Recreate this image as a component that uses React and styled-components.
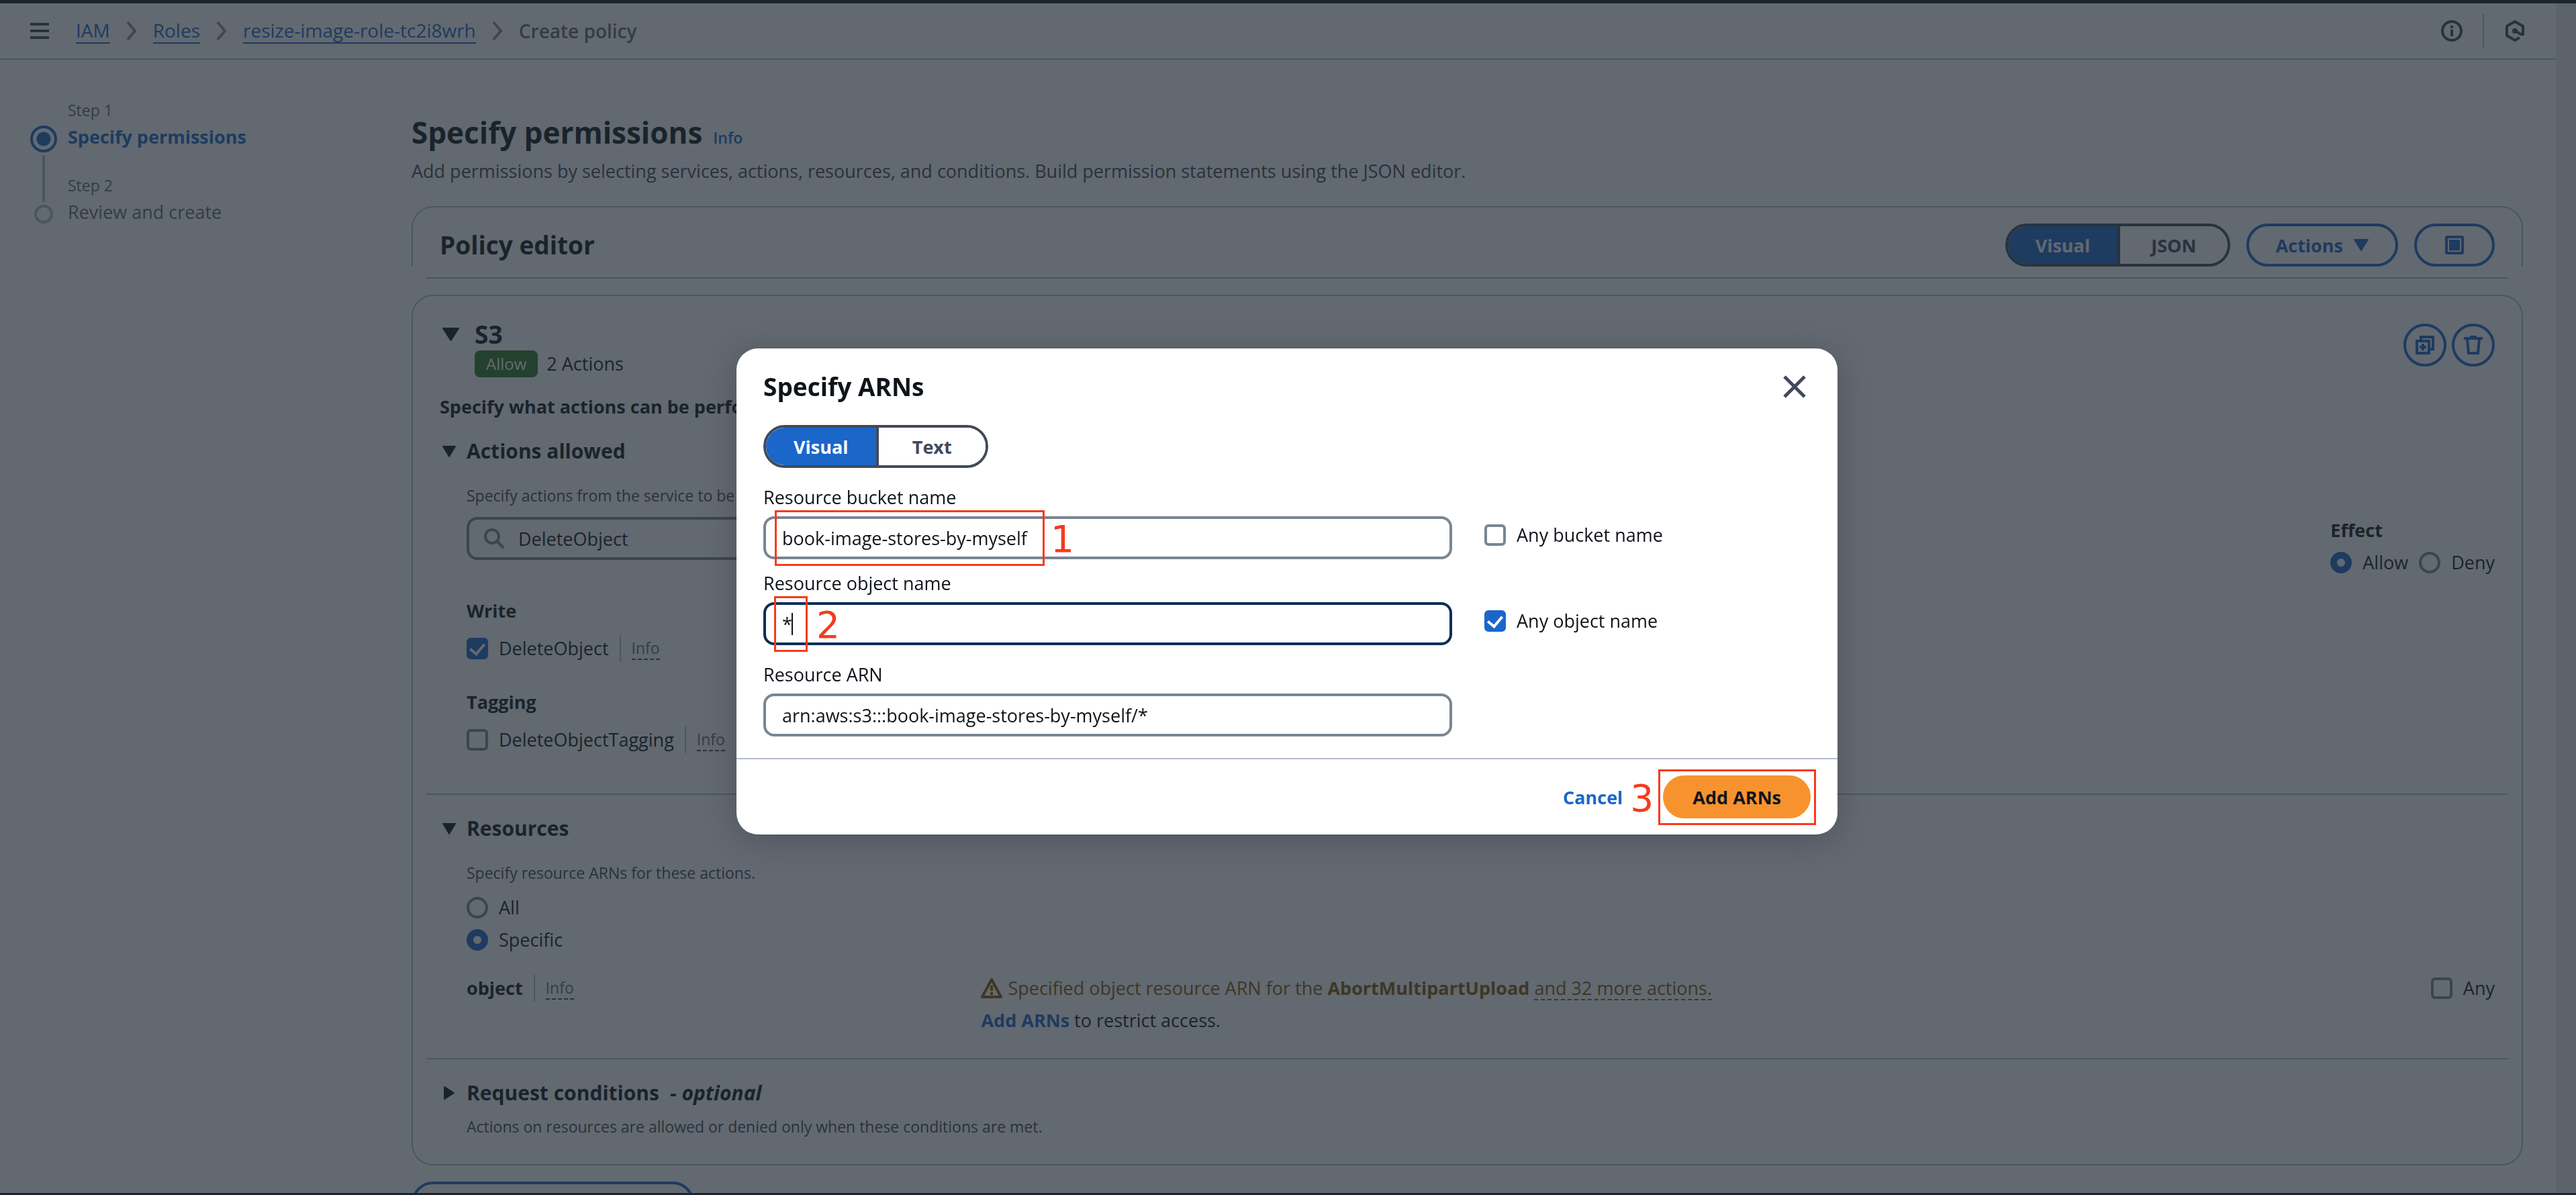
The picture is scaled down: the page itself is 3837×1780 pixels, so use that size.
import React from 'react';
import styled, { createGlobalStyle, css } from 'styled-components';

const c = {
  ink: '#0f141a',
  body: '#424650',
  muted: '#656871',
  blue: '#1b66c9',
  line: '#b4bcc9',
  field: '#7a8594',
  frame: '#424a58',
  red: '#f53b1e',
};

const Global = createGlobalStyle`
  * { box-sizing: border-box; }
  body {
    margin: 0;
    background: #161d26;
    color: ${c.ink};
    font-size: 27px;
    line-height: 40px;
  }
  body, button, input { font-family: "Open Sans", "Noto Sans", sans-serif; }
  h1, h2, h3, p, ol, ul { margin: 0; padding: 0; }
  ol, ul { list-style: none; }
  svg { display: block; flex: none; }
`;

const Shell = styled.div`
  height: 100vh;
  overflow: hidden;
  display: grid;
  grid-template-rows: 5px minmax(0, 1fr) 3px;
  background: #161d26;
`;
const Window = styled.div`
  grid-row: 2;
  display: grid;
  grid-template-columns: minmax(0, 1fr) 30px;
  background: #fff;
  overflow: hidden;
`;
const ScrollTrack = styled.div`
  background: #ececec;
`;
const Page = styled.div`
  min-width: 0;
`;

/* ---------- top navigation ---------- */
const Nav = styled.header`
  height: 84px;
  padding: 0 45px;
  display: flex;
  align-items: center;
  gap: 40px;
  border-bottom: 2px solid ${c.line};
`;
const PlainButton = styled.button`
  border: 0;
  padding: 0;
  background: none;
  color: ${(p) => p.$color || c.body};
  display: flex;
  cursor: pointer;
`;
const Crumbs = styled.ol`
  flex: 1;
  display: flex;
  align-items: center;
  gap: 16px;
  font-size: 28px;
  color: ${c.muted};
`;
const Crumb = styled.li`
  display: flex;
  align-items: center;
  gap: 16px;
  font-weight: ${(p) => (p.$last ? 600 : 400)};
`;
const CrumbLink = styled.a`
  color: ${c.blue};
  text-decoration: none;
  line-height: 36px;
  border-bottom: 2px solid ${c.blue};
`;
const NavTools = styled.div`
  display: flex;
  align-items: center;
  gap: 30px;
`;
const VRule = styled.span`
  width: 2px;
  height: ${(p) => p.$h}px;
  background: ${c.line};
`;

/* ---------- wizard layout ---------- */
const Wizard = styled.div`
  display: grid;
  grid-template-columns: 568px minmax(0, 1fr);
  padding: 0 49px 0 45px;
`;
const Steps = styled.ol`
  padding-top: 59px;
`;
const Step = styled.li`
  display: grid;
  grid-template-columns: 40px 1fr;
  column-gap: 16px;
  height: 112px;
`;
const Track = styled.div`
  display: flex;
  flex-direction: column;
  align-items: center;
  gap: 4px;
  padding-top: ${(p) => (p.$first ? 39 : 0)}px;
`;
const TrackLine = styled.span`
  width: 4px;
  background: ${c.line};
  ${(p) => (p.$lead ? 'height: 41px;' : 'flex: 1;')}
`;
const StepDot = styled.span`
  border-radius: 50%;
  ${(p) =>
    p.$active
      ? css`
          width: 40px;
          height: 40px;
          border: 4px solid ${c.blue};
          background: radial-gradient(circle, ${c.blue} 10px, transparent 11px);
        `
      : css`
          width: 28px;
          height: 28px;
          border: 4px solid ${c.line};
        `}
`;
const StepText = styled.div`
  display: flex;
  flex-direction: column;
  gap: 4px;
`;
const StepNumber = styled.span`
  font-size: 23px;
  line-height: 32px;
  color: ${c.muted};
`;
const StepName = styled.a`
  color: ${(p) => (p.$active ? c.blue : c.muted)};
  font-weight: ${(p) => (p.$active ? 700 : 400)};
  text-decoration: none;
`;

const Main = styled.main`
  padding-top: 78px;
`;
const TitleRow = styled.div`
  display: flex;
  align-items: baseline;
  gap: 16px;
`;
const PageTitle = styled.h1`
  font-size: 44px;
  line-height: 60px;
  font-weight: 700;
`;
const InfoLink = styled.a`
  font-size: 23px;
  font-weight: 600;
  color: ${c.blue};
  text-decoration: none;
`;
const Lead = styled.p`
  margin: 8px 0 32px;
  color: ${c.body};
`;

/* ---------- buttons ---------- */
const Pill = styled.button`
  height: 64px;
  padding: 0 40px;
  border: 4px solid ${c.blue};
  border-radius: 32px;
  background: #fff;
  color: ${c.blue};
  font-size: 27px;
  font-weight: 700;
  display: flex;
  align-items: center;
  justify-content: center;
  gap: 16px;
  cursor: pointer;
  ${(p) => p.$icon && 'width: 120px; padding: 0;'}
  ${(p) => p.$round && 'width: 64px; padding: 0;'}
  ${(p) => p.$link && 'border-color: transparent; background: none;'}
  ${(p) => p.$primary && `border-color: #f7932f; background: #f7932f; color: ${c.ink};`}
`;
const Segments = styled.div`
  width: 335px;
  height: 64px;
  display: grid;
  grid-template-columns: 1fr 1fr;
  border: 4px solid ${c.frame};
  border-radius: 32px;
  overflow: hidden;
  background: #fff;
`;
const Segment = styled.button`
  border: 0;
  padding: 0;
  font-size: 27px;
  font-weight: 700;
  color: ${(p) => (p.$on ? '#fff' : c.frame)};
  background: ${(p) => (p.$on ? c.blue : '#fff')};
  & + & {
    border-left: 4px solid ${c.frame};
  }
`;

/* ---------- policy editor ---------- */
const EditorHeader = styled.section`
  padding: 24px 40px 0;
  display: flex;
  align-items: center;
  justify-content: space-between;
  border: 2px solid ${c.line};
  border-bottom: 0;
  border-radius: 32px 32px 0 0;
`;
const CardTitle = styled.h2`
  font-size: 37px;
  line-height: 48px;
  font-weight: 700;
`;
const Tools = styled.div`
  display: flex;
  gap: ${(p) => p.$gap}px;
`;
const EditorRule = styled.div`
  margin: 16px 22px 24px;
  height: 2px;
  background: ${c.line};
`;
const Card = styled.section`
  padding: 33px 0 40px;
  border: 2px solid ${c.line};
  border-radius: 32px;
`;
const CardHead = styled.div`
  padding: 0 40px;
  display: flex;
  justify-content: space-between;
`;
const ServiceTitle = styled.div`
  display: grid;
  grid-template-columns: 52px auto;
`;
const Caret = styled.button`
  border: 0;
  padding: 0 0 0 4px;
  background: none;
  color: ${c.ink};
  display: flex;
  align-items: center;
`;
const Summary = styled.div`
  grid-column: 2;
  display: flex;
  align-items: center;
  gap: 13px;
  height: 40px;
`;
const Badge = styled.span`
  padding: 0 17px;
  border-radius: 8px;
  background: #2e7a22;
  color: #fff;
  font-size: 24px;
`;
const ServiceTools = styled.div`
  padding-top: 8px;
  display: flex;
  gap: 8px;
`;
const Prompt = styled.p`
  margin: 24px 40px;
  font-weight: 700;
`;
const Section = styled.section`
  padding: 0 40px;
`;
const SectionHead = styled.div`
  display: grid;
  grid-template-columns: 40px 1fr;
`;
const SectionTitle = styled.h3`
  font-size: 30px;
  line-height: 44px;
  font-weight: 700;
  display: flex;
  gap: 16px;
`;
const SectionBody = styled.div`
  padding-left: 40px;
`;
const Hint = styled.p`
  margin-top: ${(p) => p.$top}px;
  font-size: 23px;
  line-height: 32px;
  color: ${c.body};
`;
const Hr = styled.hr`
  margin: ${(p) => p.$top}px 20px 28px;
  border: 0;
  height: 2px;
  background: ${c.line};
`;
const Split = styled.div`
  margin-top: 16px;
  display: flex;
  justify-content: space-between;
  align-items: flex-start;
  height: 64px;
`;
const SearchBox = styled.label`
  width: 33%;
  height: 64px;
  padding: 0 22px;
  display: flex;
  align-items: center;
  gap: 20px;
  border: 4px solid ${c.field};
  border-radius: 16px;
  color: ${c.field};
`;
const SearchInput = styled.input`
  flex: 1;
  border: 0;
  padding: 0;
  background: none;
  font-size: 27px;
  color: ${c.ink};
  outline: 0;
`;
const Effect = styled.fieldset`
  margin: 0;
  border: 0;
  padding: 0;
  display: grid;
  gap: 8px;
`;
const Strong = styled.div`
  font-weight: 700;
  ${(p) => p.$top && `margin-top: ${p.$top}px;`}
`;
const Line = styled.div`
  display: flex;
  align-items: center;
  gap: 16px;
  height: 40px;
  ${(p) => p.$top && `margin-top: ${p.$top}px;`}
`;
const Choice = styled.label`
  display: flex;
  align-items: center;
  gap: 16px;
  height: 40px;
`;
const Box = styled.input.attrs({ type: 'checkbox' })`
  appearance: none;
  margin: 0;
  width: 32px;
  height: 32px;
  flex: none;
  border: 4px solid ${c.field};
  border-radius: 6px;
  display: grid;
  place-items: center;
  &:checked {
    border-color: ${c.blue};
    background: ${c.blue};
  }
  &:checked::after {
    content: '';
    width: 10px;
    height: 17px;
    margin-bottom: 4px;
    border: solid #fff;
    border-width: 0 4px 4px 0;
    transform: rotate(40deg);
  }
`;
const Radio = styled.input.attrs({ type: 'radio' })`
  appearance: none;
  margin: 0;
  width: 32px;
  height: 32px;
  flex: none;
  border: 4px solid ${c.field};
  border-radius: 50%;
  &:checked {
    border: 10px solid ${c.blue};
  }
`;
const Term = styled.button`
  border: 0;
  border-bottom: 2px dashed ${(p) => p.$color || c.body};
  padding: 0;
  background: none;
  font-size: ${(p) => (p.$large ? 27 : 23)}px;
  line-height: 32px;
  color: ${(p) => p.$color || c.muted};
`;
const ResourceGrid = styled.div`
  margin-top: 32px;
  display: grid;
  grid-template-columns: minmax(0, 1fr) minmax(0, 3fr) auto;
  column-gap: 70px;
`;
const Warning = styled.div`
  display: flex;
  align-items: center;
  gap: 8px;
  height: 40px;
  color: #855900;
`;
const TextButton = styled.button`
  border: 0;
  padding: 0;
  background: none;
  font-size: 27px;
  font-weight: 700;
  line-height: 40px;
  color: ${c.blue};
`;
const AddRow = styled.div`
  margin-top: 24px;
`;
const AddPermissions = styled(Pill)`
  width: 421px;
`;

/* ---------- dialog ---------- */
const Overlay = styled.div`
  position: fixed;
  inset: 0;
  padding: 0 3px 18px 0;
  display: flex;
  align-items: center;
  justify-content: center;
  background: rgba(32, 42, 51, 0.7);
`;
const Dialog = styled.div`
  width: 1640px;
  max-width: 100%;
  border-radius: 32px;
  background: #fff;
  box-shadow: 0 8px 48px rgba(40, 30, 50, 0.3);
`;
const DialogHead = styled.div`
  padding: 33px 47px 33px 40px;
  display: flex;
  align-items: center;
  justify-content: space-between;
`;
const DialogBody = styled.div`
  padding: 0 40px 32px;
`;
const FieldRow = styled.div`
  margin-top: ${(p) => p.$top}px;
  display: grid;
  grid-template-columns: minmax(0, 19fr) minmax(0, 9fr);
  column-gap: 48px;
`;
const Field = styled.div`
  display: grid;
  gap: 8px;
`;
const InputWrap = styled.div`
  position: relative;
`;
const TextInput = styled.input`
  display: block;
  width: 100%;
  height: 64px;
  padding: 0 24px;
  border: 4px solid ${(p) => (p.$focus ? '#0b2e57' : c.field)};
  border-radius: 16px;
  font-size: 27px;
  color: ${c.ink};
  outline: 0;
`;
const TextCaret = styled.span`
  position: absolute;
  left: 42px;
  top: 16px;
  width: 2px;
  height: 33px;
  background: ${c.ink};
`;
const Aside = styled.div`
  align-self: end;
  padding-bottom: 16px;
`;
const DialogFoot = styled.div`
  padding: 24px 40px;
  display: flex;
  justify-content: flex-end;
  gap: 16px;
  border-top: 2px solid ${c.line};
`;
const Marked = styled.div`
  position: relative;
`;
const MarkFrame = styled.span`
  position: absolute;
  left: ${(p) => p.$x}px;
  top: -9px;
  width: ${(p) => p.$w}px;
  height: 83px;
  border: 3px solid ${c.red};
  pointer-events: none;
`;
const MarkNumber = styled.span`
  position: absolute;
  left: ${(p) => p.$x}px;
  top: 0;
  font-family: "DejaVu Sans", sans-serif;
  font-size: 55px;
  line-height: 68px;
  color: ${c.red};
  pointer-events: none;
`;

/* ---------- icons ---------- */
const Chevron = () => (
  <svg width="32" height="32" viewBox="0 0 32 32" fill="none" stroke="#8c8c94" strokeWidth="4">
    <path d="M10 3l11 13-11 13" />
  </svg>
);
const Down = ({ w, h }) => (
  <svg width={w} height={h} viewBox="0 0 24 20" preserveAspectRatio="none" fill="currentColor" stroke="currentColor" strokeWidth="2" strokeLinejoin="round">
    <path d="M1 1h22L12 19z" />
  </svg>
);
const Right = () => (
  <svg width="20" height="22" viewBox="0 0 20 22" fill="currentColor" stroke="currentColor" strokeWidth="2" strokeLinejoin="round">
    <path d="M3 2v18l14-9z" />
  </svg>
);

const InfoTerm = () => <Term type="button">Info</Term>;

function ActionOption({ id, name, checked }) {
  return (
    <Line $top={16}>
      <Choice htmlFor={id}>
        <Box id={id} defaultChecked={checked} />
        {name}
      </Choice>
      <VRule $h={40} />
      <InfoTerm />
    </Line>
  );
}

export default function App() {
  return (
    <>
      <Global />
      <Shell>
        <Window>
          <Page>
            <Nav>
              <PlainButton type="button" aria-label="Open navigation">
                <svg width="28" height="24" viewBox="0 0 28 24" fill="currentColor">
                  <path d="M0 0h28v4H0zM0 10h28v4H0zM0 20h28v4H0z" />
                </svg>
              </PlainButton>
              <Crumbs>
                {['IAM', 'Roles', 'resize-image-role-tc2i8wrh'].map((t) => (
                  <Crumb key={t}>
                    <CrumbLink href="#">{t}</CrumbLink>
                    <Chevron />
                  </Crumb>
                ))}
                <Crumb $last>Create policy</Crumb>
              </Crumbs>
              <NavTools>
                <PlainButton type="button" aria-label="Help">
                  <svg width="32" height="32" viewBox="0 0 32 32" fill="none" stroke="currentColor" strokeWidth="4">
                    <circle cx="16" cy="16" r="14" />
                    <path d="M16 8v4M16 14v10" />
                  </svg>
                </PlainButton>
                <VRule $h={50} />
                <PlainButton type="button" aria-label="Amazon Q">
                  <svg width="32" height="32" viewBox="0 0 32 32" fill="none" stroke="currentColor" strokeWidth="4" strokeLinejoin="round">
                    <path d="M28 23V9L16 2 4 9v14l12 7 7-4" />
                    <circle cx="16" cy="16" r="4" fill="currentColor" stroke="none" />
                    <path d="M16 16l11 6" />
                  </svg>
                </PlainButton>
              </NavTools>
            </Nav>

            <Wizard>
              <Steps>
                <Step>
                  <Track $first>
                    <StepDot $active />
                    <TrackLine />
                  </Track>
                  <StepText>
                    <StepNumber>Step 1</StepNumber>
                    <StepName href="#" $active>Specify permissions</StepName>
                  </StepText>
                </Step>
                <Step>
                  <Track>
                    <TrackLine $lead />
                    <StepDot />
                  </Track>
                  <StepText>
                    <StepNumber>Step 2</StepNumber>
                    <StepName href="#">Review and create</StepName>
                  </StepText>
                </Step>
              </Steps>

              <Main>
                <TitleRow>
                  <PageTitle>Specify permissions</PageTitle>
                  <InfoLink href="#">Info</InfoLink>
                </TitleRow>
                <Lead>
                  Add permissions by selecting services, actions, resources, and conditions. Build permission statements using the JSON editor.
                </Lead>

                <EditorHeader>
                  <CardTitle>Policy editor</CardTitle>
                  <Tools $gap={24}>
                    <Segments>
                      <Segment type="button" $on>Visual</Segment>
                      <Segment type="button">JSON</Segment>
                    </Segments>
                    <Pill type="button">
                      Actions
                      <Down w={22} h={18} />
                    </Pill>
                    <Pill type="button" $icon aria-label="Toggle panel">
                      <svg width="28" height="28" viewBox="0 0 28 28" fill="none" stroke="currentColor">
                        <rect x="2" y="2" width="24" height="24" rx="1" strokeWidth="4" />
                        <rect x="6" y="6" width="16" height="16" fill="currentColor" stroke="none" />
                        <rect x="5" y="5" width="18" height="18" stroke="#fff" strokeWidth="2" />
                      </svg>
                    </Pill>
                  </Tools>
                </EditorHeader>
                <EditorRule />

                <Card>
                  <CardHead>
                    <ServiceTitle>
                      <Caret type="button" aria-label="Collapse S3">
                        <Down w={25} h={20} />
                      </Caret>
                      <CardTitle>S3</CardTitle>
                      <Summary>
                        <Badge>Allow</Badge>
                        <span>2 Actions</span>
                      </Summary>
                    </ServiceTitle>
                    <ServiceTools>
                      <Pill type="button" $round aria-label="Duplicate">
                        <svg width="28" height="28" viewBox="0 0 28 28" fill="none" stroke="currentColor" strokeWidth="4">
                          <path d="M8 8V2h18v18h-6" />
                          <path d="M2 8h18v18H2zM11 12v10M6 17h10" />
                        </svg>
                      </Pill>
                      <Pill type="button" $round aria-label="Delete">
                        <svg width="28" height="28" viewBox="0 0 28 28" fill="none" stroke="currentColor" strokeWidth="4">
                          <path d="M0 4h28M9 2h10M5 5l2 21h14l2-21" />
                        </svg>
                      </Pill>
                    </ServiceTools>
                  </CardHead>
                  <Prompt>Specify what actions can be performed on specific resources in S3.</Prompt>

                  <Section>
                    <SectionHead>
                      <Caret type="button" aria-label="Collapse actions">
                        <Down w={20} h={17} />
                      </Caret>
                      <SectionTitle>Actions allowed</SectionTitle>
                    </SectionHead>
                    <SectionBody>
                      <Hint $top={28}>Specify actions from the service to be allowed.</Hint>
                      <Split>
                        <SearchBox>
                          <svg width="31" height="31" viewBox="0 0 31 31" fill="none" stroke="currentColor" strokeWidth="4">
                            <circle cx="12" cy="12" r="10" />
                            <path d="M19 19l10 10" />
                          </svg>
                          <SearchInput type="text" aria-label="Filter actions" defaultValue="DeleteObject" />
                        </SearchBox>
                        <Effect>
                          <Strong>Effect</Strong>
                          <Line>
                            <Choice>
                              <Radio name="effect" defaultChecked />
                              Allow
                            </Choice>
                            <Choice>
                              <Radio name="effect" />
                              Deny
                            </Choice>
                          </Line>
                        </Effect>
                      </Split>
                      <Strong $top={56}>Write</Strong>
                      <ActionOption id="delete-object" name="DeleteObject" checked />
                      <Strong $top={40}>Tagging</Strong>
                      <ActionOption id="delete-object-tagging" name="DeleteObjectTagging" />
                    </SectionBody>
                  </Section>

                  <Hr $top={60} />

                  <Section>
                    <SectionHead>
                      <Caret type="button" aria-label="Collapse resources">
                        <Down w={20} h={17} />
                      </Caret>
                      <SectionTitle>Resources</SectionTitle>
                    </SectionHead>
                    <SectionBody>
                      <Hint $top={28}>Specify resource ARNs for these actions.</Hint>
                      <Line $top={16}>
                        <Choice>
                          <Radio name="scope" />
                          All
                        </Choice>
                      </Line>
                      <Line $top={8}>
                        <Choice>
                          <Radio name="scope" defaultChecked />
                          Specific
                        </Choice>
                      </Line>
                      <ResourceGrid>
                        <Line>
                          <Strong>object</Strong>
                          <VRule $h={40} />
                          <InfoTerm />
                        </Line>
                        <div>
                          <Warning>
                            <svg width="32" height="32" viewBox="0 0 32 32" fill="none" stroke="currentColor" strokeWidth="4" strokeLinejoin="round">
                              <path d="M16 3L2 29h28z" />
                              <path d="M16 12v8M16 22v4" />
                            </svg>
                            <span>
                              Specified object resource ARN for the <b>AbortMultipartUpload</b>{' '}
                              <Term type="button" $large $color="#855900">and 32 more actions.</Term>
                            </span>
                          </Warning>
                          <Line $top={8}>
                            <span>
                              <TextButton type="button">Add ARNs</TextButton> to restrict access.
                            </span>
                          </Line>
                        </div>
                        <Choice>
                          <Box />
                          Any
                        </Choice>
                      </ResourceGrid>
                    </SectionBody>
                  </Section>

                  <Hr $top={36} />

                  <Section>
                    <SectionHead>
                      <Caret type="button" aria-label="Expand request conditions">
                        <Right />
                      </Caret>
                      <SectionTitle>
                        Request conditions
                        <span>
                          - <i>optional</i>
                        </span>
                      </SectionTitle>
                    </SectionHead>
                    <SectionBody>
                      <Hint $top={12}>
                        Actions on resources are allowed or denied only when these conditions are met.
                      </Hint>
                    </SectionBody>
                  </Section>
                </Card>

                <AddRow>
                  <AddPermissions type="button" aria-label="Add more permissions" />
                </AddRow>
              </Main>
            </Wizard>
          </Page>
          <ScrollTrack />
        </Window>
      </Shell>

      <Overlay>
        <Dialog role="dialog" aria-modal="true" aria-labelledby="arn-title">
          <DialogHead>
            <CardTitle id="arn-title">Specify ARNs</CardTitle>
            <PlainButton type="button" aria-label="Close" $color={c.frame}>
              <svg width="34" height="34" viewBox="0 0 34 34" fill="none" stroke="currentColor" strokeWidth="5">
                <path d="M2 2l30 30M32 2L2 32" />
              </svg>
            </PlainButton>
          </DialogHead>
          <DialogBody>
            <Segments>
              <Segment type="button" $on>Visual</Segment>
              <Segment type="button">Text</Segment>
            </Segments>
            <FieldRow $top={24}>
              <Field>
                <label htmlFor="bucket">Resource bucket name</label>
                <InputWrap>
                  <TextInput id="bucket" type="text" defaultValue="book-image-stores-by-myself" />
                  <MarkFrame $x={17} $w={402} />
                  <MarkNumber $x={428}>1</MarkNumber>
                </InputWrap>
              </Field>
              <Aside>
                <Choice>
                  <Box />
                  Any bucket name
                </Choice>
              </Aside>
            </FieldRow>
            <FieldRow $top={16}>
              <Field>
                <label htmlFor="object">Resource object name</label>
                <InputWrap>
                  <TextInput id="object" type="text" defaultValue="*" $focus />
                  <TextCaret />
                  <MarkFrame $x={16} $w={50} />
                  <MarkNumber $x={79}>2</MarkNumber>
                </InputWrap>
              </Field>
              <Aside>
                <Choice>
                  <Box defaultChecked />
                  Any object name
                </Choice>
              </Aside>
            </FieldRow>
            <FieldRow $top={24}>
              <Field>
                <label htmlFor="arn">Resource ARN</label>
                <TextInput id="arn" type="text" defaultValue="arn:aws:s3:::book-image-stores-by-myself/*" />
              </Field>
            </FieldRow>
          </DialogBody>
          <DialogFoot>
            <Pill type="button" $link>Cancel</Pill>
            <Marked>
              <Pill type="button" $primary>Add ARNs</Pill>
              <MarkFrame $x={-7} $w={235} />
              <MarkNumber $x={-49}>3</MarkNumber>
            </Marked>
          </DialogFoot>
        </Dialog>
      </Overlay>
    </>
  );
}
